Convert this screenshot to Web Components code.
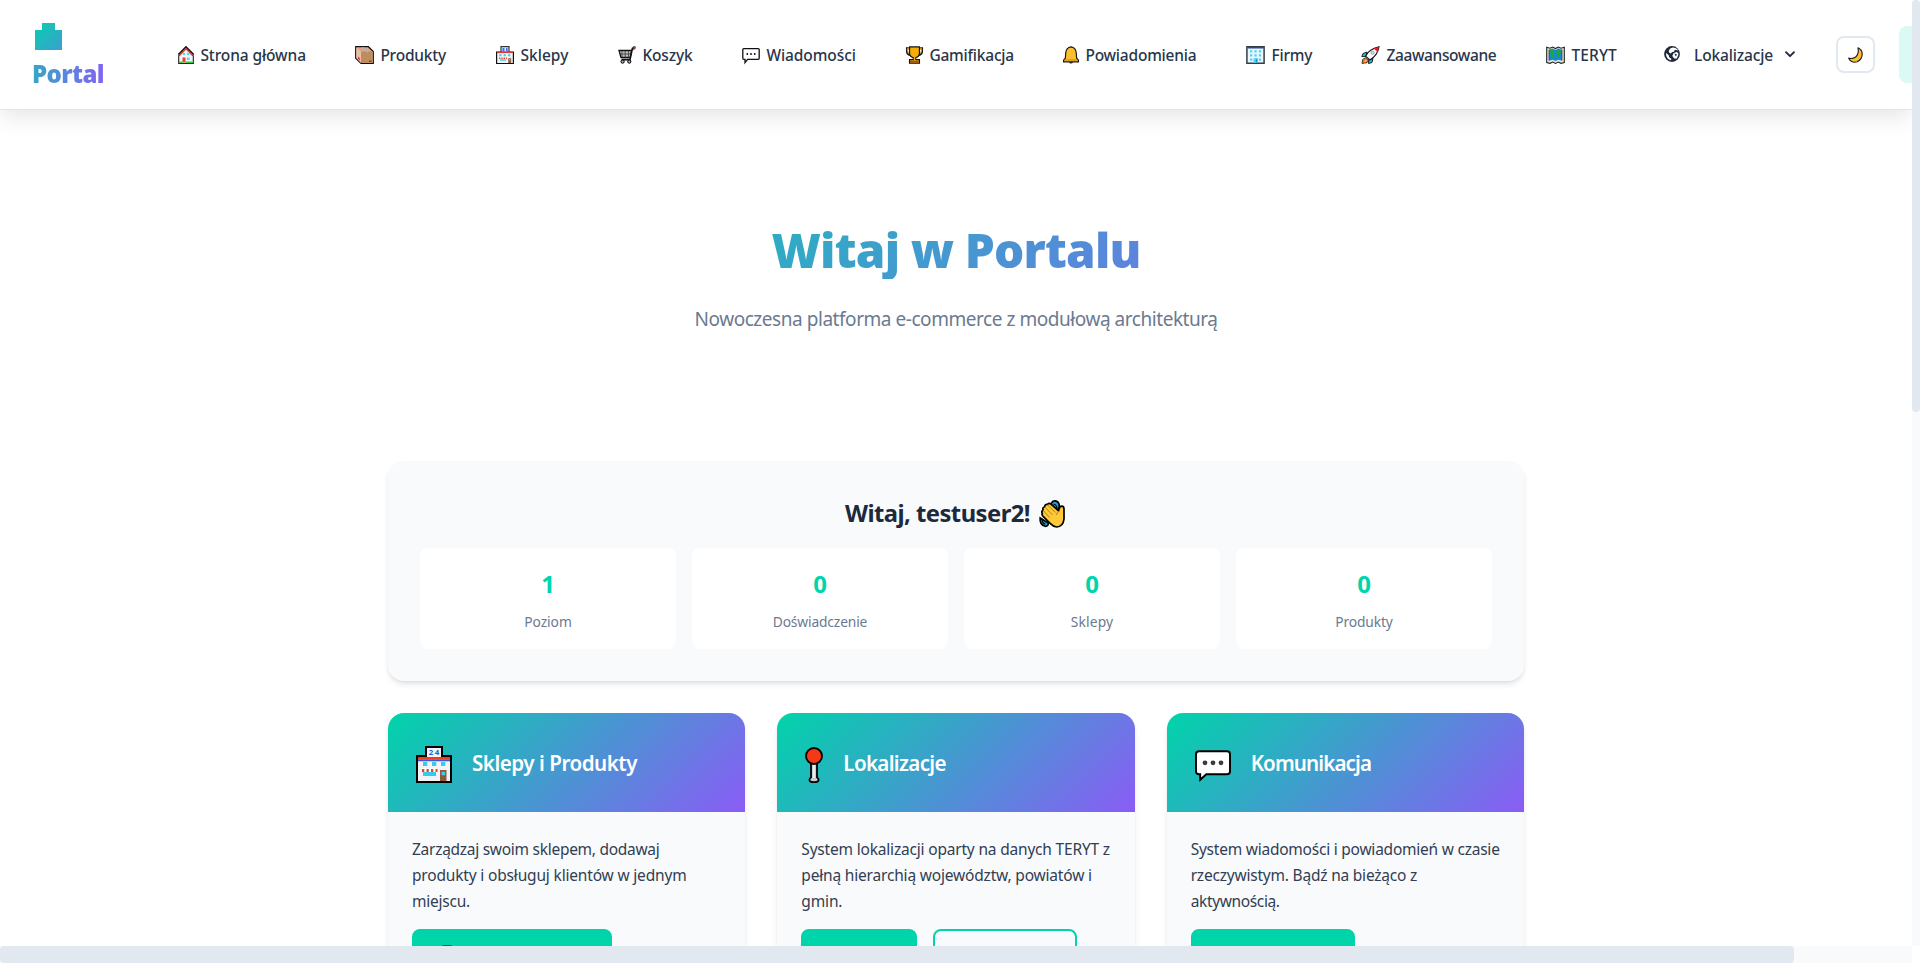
<!DOCTYPE html>
<html lang="pl">
<head>
<meta charset="utf-8">
<title>Portal</title>
<style>
html,body{margin:0;height:963px;overflow:hidden;background:#fff}
body{font-family:"Noto Sans","Open Sans",sans-serif;color:#1e293b}
</style>
</head>
<body>
<portal-app></portal-app>
<script>
const ICONS = {
home:[16,18,`<path d="M1 9v8h14V9L8 2z" fill="#f4f4f6"/><path d="M.7 9.3V17.5H15.3V9.3" fill="none" stroke="#222" stroke-width="1.1"/><path d="M.7 9L8 1.6 15.3 9" fill="none" stroke="#111" stroke-width="2.6"/><path d="M1.4 9.2L8 2.6l6.6 6.6" fill="none" stroke="#d94a38" stroke-width="1.4"/><path d="M5 7h2v2H5zM9 7h2v2H9zM9 11.5h2.5V14H9z" fill="#4bd7ff"/><path d="M4.5 11.5h3v5h-3z" fill="#e8452c"/><path d="M1.2 15.4h3.3v1.5H1.2zM7.5 15.4h7.3v1.5H7.5z" fill="#2fcf3a"/>`],
box:[19,18,`<path d="M.7.7h12.6l5 4.8v12H6L.7 12.2z" fill="#d9a887" stroke="#111" stroke-width="1.2"/><path d="M6 5.5h11.8V17H6z" fill="#bd8d60"/><path d="M1.3 1.6L6 5.8V17L1.3 12z" fill="#e9bfa6"/><path d="M6.5 1.2l4.5 4.2 2 1.6V5.5L8.8 1.2z" fill="#aab4c2"/><path d="M3 10.5l2 2v2l-2-2z" fill="#e02a3c"/><path d="M14 14.5h2.5v1.5H14z" fill="#74502f"/>`],
shop:[18,18,`<path d="M.6 6h16.800v11.5H.6z" fill="#f2f4f7" stroke="#111" stroke-width="1.200"/><path d="M5 .6h8V6H5z" fill="#eef2ff" stroke="#333" stroke-width="1.200"/><path d="M6.5 2h2v3h-2zM10 2h1.6v3H10z" fill="#3a6be6"/><path d="M1.2 5.6h15.600v1.5H1.200z" fill="#e23c2e"/><path d="M3.3 8.3h2.2v2H3.3zM7.6 8.3h2.2v2H7.6zM12 8.3h2.2v2H12zM4 13.2h6v1.6H4z" fill="#3fcbf2"/><path d="M3 12.2h8" stroke="#f04a30" stroke-width="1.5" stroke-dasharray="1.4 .9"/><path d="M12.2 12.2h3V17h-3z" fill="#8c5f42"/><path d="M13 13h1.4v1.3H13z" fill="#48c8ee"/>`],
cart:[18,18,`<path d="M1 4.5h12.5l-1.3 7H3z" fill="#c4c4c4" stroke="#111" stroke-width="1.3"/><path d="M4 5v6M7.200 5v6M10.400 5v6M1.700 8h11.200" stroke="#333" stroke-width=".8"/><path d="M17 1.2l-2.6 1.2-2.4 11.2H3.5" fill="none" stroke="#111" stroke-width="1.6"/><path d="M15.3.6l2.2.2-.3 2-2 1z" fill="#e8543e" stroke="#111" stroke-width=".5"/><circle cx="4.6" cy="15.6" r="1.600" fill="#bbb" stroke="#111" stroke-width="1.1"/><circle cx="11.3" cy="15.6" r="1.600" fill="#bbb" stroke="#111" stroke-width="1.1"/>`],
chat:[18,18,`<path d="M1.8 2.6h14.4q1 0 1 1v8.7q0 1-1 1H5.6L3 16.6v-3.3H1.8q-1 0-1-1V3.6q0-1 1-1z" fill="#fff" stroke="#111" stroke-width="1.3"/><circle cx="5.3" cy="8" r=".9"/><circle cx="9" cy="8" r=".9"/><circle cx="12.7" cy="8" r=".9"/>`],
cup:[17,18,`<path d="M4.5 2.2H1v3.2Q1.2 8.8 5 9M12.5 2.2H16v3.2Q15.8 8.8 12 9" fill="none" stroke="#111" stroke-width="2.1"/><path d="M4.5 2.3H1.4v3Q1.5 8 5 8.4M12.5 2.3h3.1v3Q15.500 8 12 8.400" fill="none" stroke="#e7a400" stroke-width="1"/><path d="M3.6.9h9.8v6.500q-.3 3.500-3.600 4.200v2h3.700v3.700h-10v-3.700h3.700v-2Q3.900 10.900 3.600 7.400z" fill="#f5ad08" stroke="#111" stroke-width="1.1"/><path d="M4 14.700h9v2.100H4z" fill="#9a5525"/>`],
bell:[16,18,`<path d="M8 .8q5 .8 5.300 6.200l.3 5 1.800 2.200v1.600H.6v-1.600L2.400 12l.3-5Q3 1.600 8 .8z" fill="#fdbf2d" stroke="#1a1a1a" stroke-width="1.200"/><path d="M1.500 14h13" stroke="#c98110"/><path d="M6 16h4q-.4 1.600-2 1.600T6 16z" fill="#222"/>`],
office:[19,18,`<path d="M.9.700h17.200v16.600H.9z" fill="#f3f4f6" stroke="#333d49" stroke-width="1.500"/><path d="M1.500 1h16v1.500h-16z" fill="#174ea6"/><path d="M4 4.200h2.300v2.300H4zM8.400 4.200h2.300v2.300H8.400zM12.800 4.200h2.300v2.300h-2.300zM4 8.300h2.300v2.300H4zM8.400 8.300h2.300v2.300H8.400zM12.800 8.300h2.300v2.300h-2.300zM4 12.500h2.300v2.300H4zM12.800 12.500h2.300v2.300h-2.300zM7.500 12.300h4.200v4.400H7.500z" fill="#4fd3fb"/><path d="M9.800 12.700h1.600v4H9.800z" fill="#239bd2"/>`],
rocket:[19,18,`<path d="M6 6L2 7.500.8 10.500l4 .200zM12 12.500l-1 4-3.500 1 .2-4z" fill="#20b9ec" stroke="#111" stroke-width=".9"/><path d="M4.600 10.200Q7.800 3.200 18 .800 16.500 9.500 8.800 14z" fill="#f8fafc" stroke="#111" stroke-width="1.100"/><path d="M12.600 2.400L18 .900l-1.600 5z" fill="#e71d36"/><circle cx="11.600" cy="6.700" r="1.700" fill="#cbd5da" stroke="#8d969c" stroke-width=".6"/><path d="M4.500 11.800l3 2.600-1.500 2.300-5 .8.600-4z" fill="#ed762f" stroke="#111" stroke-width=".7"/><path d="M4.600 13.500l1.400 1-1.500 1.500-1.500.2z" fill="#ffc83d"/>`],
map:[19,18,`<path d="M.7 1.200l3.300 1 2.700-1.200 2.800 1.600L12.300 1 15 2.200l3.300-1v15.300l-3.300.800-2.700-1.200-2.800 1.300-2.800-1.300L4 17.300l-3.300-.8z" fill="#eee6d0" stroke="#1b2526" stroke-width="1.100"/><path d="M3 3.700l3.700-1.200 2.800 1.500 2.800-1.500L16 3.700v11l-3.700-1-2.800 1.200-2.800-1.200-3.700 1z" fill="#1688dd"/><path d="M3.800 4.500l3-.8 1.500 1.600-1.500 3 1.800 2-.8 2.800-2-1.500-.5-3-1.500-1.500zM10 6l1.500-2 3.700.8v3l-2 1-.5 3-1.300-.7-.2-2.700z" fill="#22a637"/><path d="M3 3.500v11M16 3.500v11" stroke="#1b3846" stroke-width=".7"/>`],
globe:[16,16,`<circle cx="8" cy="8" r="7.900" fill="#1e293b"/><path d="M8.700 1.600l-2.500.8-1.500 2.400.4 1.600 1.600 1 1.500-1.400 1.900-.3.400-1.500 1.300-.5 1.700.8.600-.6Q11.800 1.600 8.700 1.600zM9.500 7.300l3-1.400 1.700 1.200.1 2-1.500 3.500-2.600-.1-1.900-2.500zM2 6.900L4.600 9l.6 2.200 2.100 1.600-.2 1.400Q2.300 13.500 2 8z" fill="#fff"/><path d="M10.300 7.600l2.700.8-1.200 2z" fill="#1e293b"/>`],
chevron:[10,7,`<path d="M1 1.200l4 4 4-4" fill="none" stroke="#1e293b" stroke-width="1.900" stroke-linecap="round" stroke-linejoin="round"/>`],
moon:[15,16,`<path d="M10 .8q3.900 2 4.200 5.700.2 5.700-5 8.300-5.500 1.800-8.500-3.600 3.900 1 6.900-1.200Q11.300 6.600 10 .8z" fill="#fdc033" stroke="#2a241b" stroke-width="1.200" stroke-linejoin="round"/>`],
wave:[26,28,`<path d="M14 1.200q4.500-1.200 6 2.800.8 3-.7 6L11 5z" fill="#20a9d8" stroke="#000" stroke-width="1.700"/><path d="M1.200 18q-.8 6.500 5 8.300 3.500-.1 3-3.300z" fill="#20a9d8" stroke="#000" stroke-width="1.700"/><path d="M14.500 4q3 .5 3.500 4M3 20q.2 3 3.300 4.200" stroke="#000" fill="none" stroke-width="1.200"/><path d="M3.400 13.600q-1.400-2.400.7-3.600-.9-2.500 1.600-3.300.1-2.500 2.600-2.300 1.500-2 3.700-.2l7.600 6.700q.6-4.600 3.200-4.700 2.200.2 2.200 3v9.800q-.8 7.600-7.300 8-3 .1-6.300-3.300l-7-7q-2.200-2.400-1-3.100z" fill="#ffc938" stroke="#000" stroke-width="1.700" stroke-linejoin="round"/><path d="M4.200 10.500l6.500 7M6 7.200l7.600 7.800M8.600 5l7.800 7.500M19.600 11l-2.400 4" fill="none" stroke="#b37b12" stroke-width="1"/>`],
store:[36,37,`<path d="M9 0h18v9h9v28H0V9h9z"/><path d="M11 2h14v9H11z" fill="#f5f5f7"/><path d="M2 11h32v24H2z" fill="#f2f3f7"/><path d="M2 11h32v2.200H2z" fill="#f03d20"/><path d="M2 13.200h32v2H2z" fill="#4155d8"/><path d="M7 16h4.300v4H7zM16 16h4.300v4H16zM25 16h4.300v4H25zM7 26h13v4H7z" fill="#35cbee"/><path d="M6 24h15" stroke="#fff" stroke-width="3.500"/><path d="M6 24.500h15.500" stroke="#f0411f" stroke-width="3" stroke-dasharray="2.300 2.200"/><path d="M24 24h6.500v11H24z" fill="#93563a"/><path d="M25.500 25.800h3.600v3.400h-3.600z" fill="#3cd0e8"/><text x="12.800" y="9.300" font-family="Noto Sans" font-size="7.800" font-weight="700" letter-spacing="1.500" fill="#2357e8">24</text>`],
pin:[18,36,`<path d="M6 14h6v16.500q1.700.8 1.500 2.700-.5 2-4.500 2t-4.500-2Q4.300 31.300 6 30.500z" fill="#c8cbce" stroke="#000" stroke-width="1.800"/><path d="M9 16v15" stroke="#fff" stroke-width="1.300"/><circle cx="9" cy="9" r="8" fill="#f23b16" stroke="#000" stroke-width="1.900"/>`],
bubble:[36,30,`<path d="M4 1.200h28q3 0 3 3v17.400q0 2.700-3 2.700H11.300L5.200 29.800v-5.500H4q-3 0-3-2.700V4.200q0-3 3-3z" fill="#fff" stroke="#000" stroke-width="1.900"/><circle cx="10" cy="12.800" r="2.400" fill="#3a3a3a"/><circle cx="18" cy="12.800" r="2.400" fill="#3a3a3a"/><circle cx="26" cy="12.800" r="2.400" fill="#3a3a3a"/>`]
};

function define(name, html, setup) {
  customElements.define(name, class extends HTMLElement {
    connectedCallback() {
      if (this.shadowRoot) return;
      const root = this.attachShadow({mode: "open"});
      const t = document.createElement("template");
      t.innerHTML = typeof html === "function" ? html(this) : html;
      root.append(t.content.cloneNode(true));
      if (setup) setup(this, root);
    }
  });
}

/* Single line of text tracked to an exact advance width */
define("fit-text", `<style>:host{display:inline-block;white-space:nowrap}span{display:inline-block}</style><span><slot></slot></span>`,
(el, root) => {
  const s = root.querySelector("span"), w = +el.getAttribute("w");
  const n = el.textContent.length;
  s.style.letterSpacing = ((w - s.getBoundingClientRect().width) / n).toFixed(3) + "px";
  el.style.width = w + "px";
});

define("ui-icon", el => {
  const [w, h, body] = ICONS[el.getAttribute("name")];
  return `<style>:host{display:block;flex:none}svg{display:block;overflow:visible}</style><svg width="${w}" height="${h}" viewBox="0 0 ${w} ${h}">${body}</svg>`;
});

define("portal-logo", `<style>
:host{display:block;width:73px;flex:none;padding-top:4px}
svg{display:block;margin:0 0 0 3px}
b{display:block;margin:8px 0 0 0;font-family:"Open Sans",sans-serif;font-size:24px;line-height:32px;font-weight:800;color:transparent;background:linear-gradient(100deg,#32a9c6,#875ff4);-webkit-background-clip:text;background-clip:text}
</style>
<svg width="27" height="27" viewBox="0 0 27 27"><defs><linearGradient id="g" x1="0" y1="0" x2="1" y2="1"><stop stop-color="#09ceb0"/><stop offset="1" stop-color="#3b9fce"/></linearGradient></defs><path d="M7 0h13v7h7v20H0V7h7z" fill="url(#g)"/></svg>
<b><fit-text w="72">Portal</fit-text></b>`);

define("nav-link", el => `<style>
:host{display:flex;align-items:center;gap:6.4px;flex:none;width:${el.getAttribute("width")}px;font-size:15.5px;font-weight:500;line-height:24px;color:#29354a}
fit-text{margin-top:1px}
</style><ui-icon name="${el.getAttribute("icon")}"></ui-icon><fit-text w="${el.getAttribute("w")}">${el.getAttribute("label")}</fit-text>`);

define("top-nav", () => {
  const links = [["home",127,105.5,"Strona główna"],["box",91,65.5,"Produkty"],["shop",72,48,"Sklepy"],["cart",74,50,"Koszyk"],["chat",114,89.5,"Wiadomości"],["cup",107,84.5,"Gamifikacja"],["bell",133,111,"Powiadomienia"],["office",65,41,"Firmy"],["rocket",135,110,"Zaawansowane"],["map",70,45.5,"TERYT"]];
  return `<style>
:host{display:flex;align-items:center;height:109px;background:#fff;border-bottom:1px solid #e2e5e9;box-shadow:0 10px 20px -2px rgba(0,0,0,.095);padding-left:32px;position:relative}
nav{display:flex;gap:50px;margin-left:73px;flex:none}
nav ui-icon{margin-top:1px}
.menu{display:flex;align-items:center;margin-left:48px;flex:none;font-size:15.500px;font-weight:500;line-height:24px;color:#29354a}
.menu fit-text{margin:1px 12px 0 14px}
.menu ui-icon{margin-bottom:1px}
button{flex:none;margin-left:41px;width:39px;height:37px;padding:0;border:2px solid #e2e8f0;border-radius:8px;background:#fff;display:flex;align-items:center;justify-content:center}
.user{flex:none;margin-left:24px;width:60px;height:57px;border-radius:8px;background:#ddf9f4}
</style>
<portal-logo></portal-logo>
<nav>${links.map(l => `<nav-link icon="${l[0]}" width="${l[1]}" w="${l[2]}" label="${l[3]}"></nav-link>`).join("")}</nav>
<div class="menu"><ui-icon name="globe"></ui-icon><fit-text w="79">Lokalizacje</fit-text><ui-icon name="chevron"></ui-icon></div>
<button aria-label="Motyw"><ui-icon name="moon"></ui-icon></button>
<div class="user"></div>`;
});

define("hero-banner", `<style>
:host{display:block;text-align:center;padding-top:111px;height:240px}
h1{margin:0;font-family:"Open Sans",sans-serif;font-size:47.600px;line-height:58px;font-weight:800;color:transparent;background:linear-gradient(135deg,#00d4aa,#8b5cf6);-webkit-background-clip:text;background-clip:text}
p{margin:24px 0 0;font-size:19px;line-height:32px;color:#6b7a90}
</style><h1><fit-text w="369">Witaj w Portalu</fit-text></h1><p><fit-text w="523">Nowoczesna platforma e-commerce z modułową architekturą</fit-text></p>`);

define("stats-panel", () => {
  const tile = (v, w, t) => `<div class="tile"><b>${v}</b><span><fit-text w="${w}">${t}</fit-text></span></div>`;
  return `<style>
:host{display:block;background:#f8fafc;border-radius:16px;padding:32px;box-shadow:0 4px 6px -1px rgba(0,0,0,.1),0 2px 4px -1px rgba(0,0,0,.06)}
header{display:flex;justify-content:center;align-items:center;gap:9px;height:39px;font-size:23.800px;font-weight:700;line-height:38px;margin-right:2px}
header ui-icon{margin-top:2px}
section{display:grid;grid-template-columns:repeat(4,1fr);gap:16px;margin-top:16px}
.tile{display:flex;flex-direction:column;align-items:center;gap:7px;background:#fff;border-radius:8px;padding:17px 0 16px}
b{font-size:24px;line-height:38px;font-weight:700;color:#00d4aa}
span{font-size:13.800px;line-height:23px;color:#6b7a90}
</style>
<header><fit-text w="185">Witaj, testuser2!</fit-text><ui-icon name="wave"></ui-icon></header>
<section>${tile(1,47.5,"Poziom")}${tile(0,94.5,"Doświadczenie")}${tile(0,42.5,"Sklepy")}${tile(0,57.5,"Produkty")}</section>`;
});

define("feature-card", el => {
  const a = n => el.getAttribute(n);
  const lines = a("lines").split("|").map(s => s.split("="));
  return `<style>
:host{display:block;border-radius:16px;background:#f8fafc;overflow:hidden;height:320px;box-shadow:0 4px 6px -1px rgba(0,0,0,.1),0 2px 4px -1px rgba(0,0,0,.06)}
header{display:flex;align-items:center;gap:20px;height:99px;padding-left:28px;background:linear-gradient(135deg,#00d4aa,#8b5cf6);color:#fff;font-size:20.600px;line-height:32px;font-weight:600}
header fit-text{margin-top:1px}
header ui-icon{margin-top:4px}
.body{padding:24px;font-size:15.500px;line-height:26px;color:#323e52}
.body fit-text{display:block}
.row{display:flex;gap:16px;margin-top:15px}
</style>
<header><ui-icon name="${a("icon")}"></ui-icon><fit-text w="${a("w")}">${a("heading")}</fit-text></header>
<div class="body">${lines.map(l => `<fit-text w="${l[1]}">${l[0]}</fit-text>`).join("")}<div class="row"><slot></slot></div></div>`;
});

define("action-button", el => `<style>
:host{display:block;box-sizing:border-box;flex:none;width:${el.getAttribute("width")}px;height:46px;border:2px solid #00d4aa;border-radius:8px;background:${el.hasAttribute("outline") ? "transparent" : "#00d4aa"}}
i{display:block;margin:14px 0 0 28px;width:10px;height:14px;border-radius:2px;background:#086b59}
</style>${el.hasAttribute("mark") ? "<i></i>" : ""}`);

define("portal-app", `<style>
:host{display:grid;width:1920px;height:963px;grid-template:946px 17px / 1912px 8px}
.view{overflow:hidden}
main{width:1136px;margin:0 auto}
.cards{display:grid;grid-template-columns:repeat(3,1fr);gap:32px;margin-top:32px}
.v,.h{background:#f8fafc}
.v::before,.h::before{content:"";display:block;background:#e2e8f0;border-radius:4px}
.v::before{height:412px}
.h::before{height:17px;width:1794px}
</style>
<div class="view"><top-nav></top-nav><main>
<hero-banner></hero-banner>
<stats-panel></stats-panel>
<div class="cards">
<feature-card icon="store" heading="Sklepy i Produkty" w="165" lines="Zarządzaj swoim sklepem, dodawaj=247.500|produkty i obsługuj klientów w jednym=274.500|miejscu.=58"><action-button width="200" mark></action-button></feature-card>
<feature-card icon="pin" heading="Lokalizacje" w="102.500" lines="System lokalizacji oparty na danych TERYT z=308.500|pełną hierarchią województw, powiatów i=290.500|gmin.=41"><action-button width="116"></action-button><action-button width="144" outline></action-button></feature-card>
<feature-card icon="bubble" heading="Komunikacja" w="120.500" lines="System wiadomości i powiadomień w czasie=309|rzeczywistym. Bądź na bieżąco z=226.500|aktywnością.=89"><action-button width="164"></action-button></feature-card>
</div></main></div>
<div class="v"></div><div class="h"></div>`);
</script>
</body>
</html>
